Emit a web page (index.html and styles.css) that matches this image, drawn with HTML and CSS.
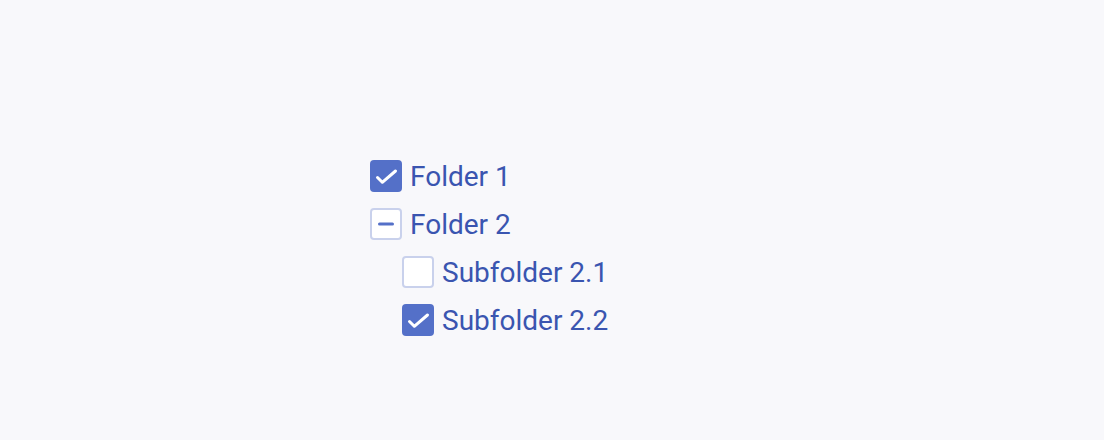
FILE: index.html
```html
<!DOCTYPE html>
<html lang="en">
<head>
    <meta charset="UTF-8">
    <meta name="viewport" content="width=device-width, initial-scale=1.0">
    <title>Folder Tree</title>
    <link rel="stylesheet" href="styles.css">
</head>
<body>
    <div class="tree">
        <label class="item">
            <span class="box checked">
                <svg viewBox="0 0 32 32" width="32" height="32"><path d="M7.5 17.5l4.8 4.8L25.5 11" fill="none" stroke="#fff" stroke-width="3" stroke-linecap="round" stroke-linejoin="round"/></svg>
            </span>
            <span class="label">Folder 1</span>
        </label>
        <label class="item">
            <span class="box partial">
                <svg viewBox="0 0 28 28" width="28" height="28"><path d="M7.5 14h13" stroke="#5470c8" stroke-width="3" stroke-linecap="round"/></svg>
            </span>
            <span class="label">Folder 2</span>
        </label>
        <div class="children">
            <label class="item">
                <span class="box"></span>
                <span class="label">Subfolder 2.1</span>
            </label>
            <label class="item">
                <span class="box checked">
                    <svg viewBox="0 0 32 32" width="32" height="32"><path d="M7.5 17.5l4.8 4.8L25.5 11" fill="none" stroke="#fff" stroke-width="3" stroke-linecap="round" stroke-linejoin="round"/></svg>
                </span>
                <span class="label">Subfolder 2.2</span>
            </label>
        </div>
    </div>
</body>
</html>
```

FILE: styles.css
```css
body {
    margin: 0;
    background-color: #f8f8fb;
    font-family: Roboto, "Liberation Sans", sans-serif;
}
.tree {
    display: flex;
    flex-direction: column;
    gap: 16px;
    padding: 160px 0 0 370px;
}
.children {
    display: flex;
    flex-direction: column;
    gap: 16px;
    padding-left: 32px;
}
.item {
    display: flex;
    align-items: center;
    gap: 8px;
    height: 32px;
    cursor: pointer;
}
.box {
    box-sizing: border-box;
    width: 32px;
    height: 32px;
    border: 2px solid #c9d1ec;
    border-radius: 4px;
    background-color: #fff;
    display: flex;
    align-items: center;
    justify-content: center;
    flex-shrink: 0;
}
.box.checked {
    border: none;
    background-color: #5470c8;
}
.label {
    font-size: 28px;
    color: #3a55b0;
    line-height: 32px;
    padding-top: 2px;
}
```
